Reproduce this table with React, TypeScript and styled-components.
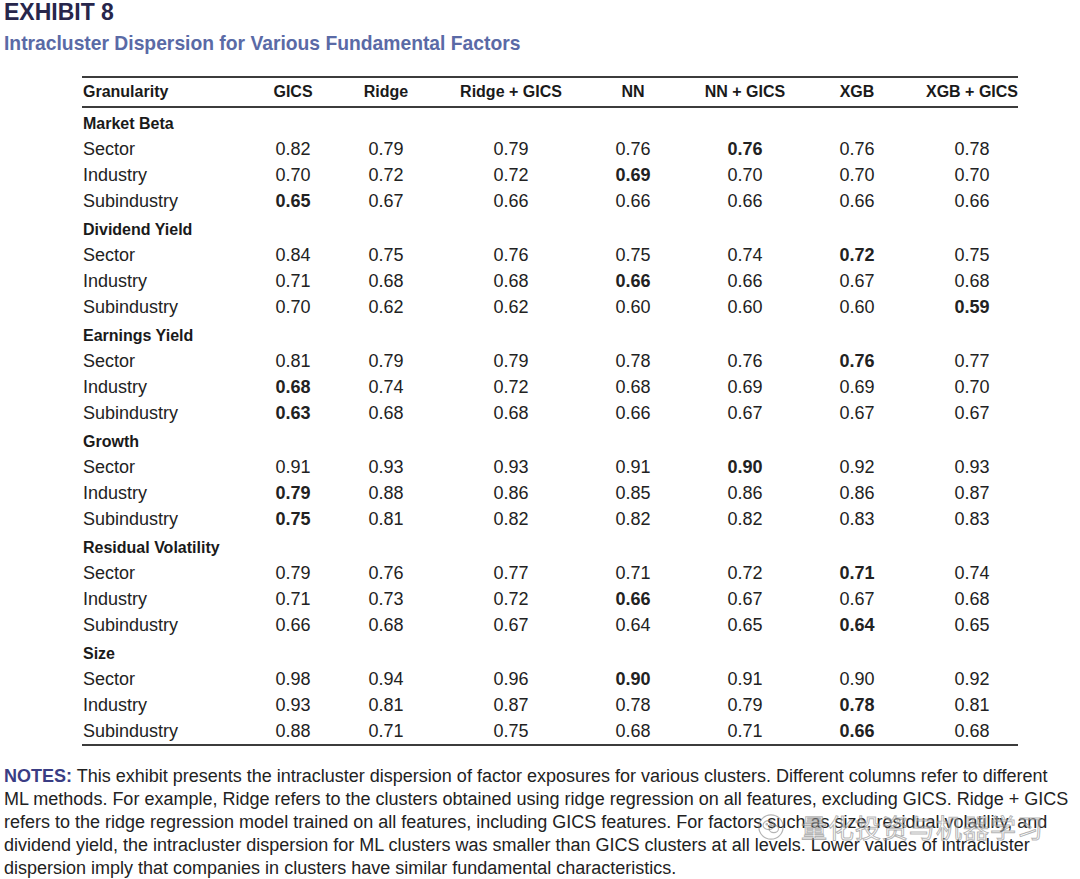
import React from 'react';
import styled, { createGlobalStyle } from 'styled-components';

const GlobalStyle = createGlobalStyle`
  html, body {
    margin: 0;
    padding: 0;
    background: #ffffff;
    overflow-x: hidden;
  }
  body {
    font-family: "Liberation Sans", Arial, sans-serif;
    color: #1f1f1f;
  }
`;

const Page = styled.div`
  width: 1080px;
  padding-left: 4px;
  box-sizing: border-box;
`;

const Title = styled.h1`
  margin: 0;
  font-size: 23px;
  line-height: 24px;
  font-weight: 700;
  color: #27264b;
`;

const Subtitle = styled.h2`
  margin: 8px 0 0;
  font-size: 19.3px;
  line-height: 24px;
  font-weight: 700;
  color: #5a6aa6;
`;

const Table = styled.div`
  margin: 20px 0 0 78px;
  width: 936px;
  border-top: 2px solid #3c3c3c;
  border-bottom: 2px solid #3c3c3c;
`;

const cols = '165px 92px 94px 156px 88px 136px 88px 1fr';

const HeaderRow = styled.div`
  display: grid;
  grid-template-columns: ${cols};
  height: 28px;
  line-height: 28px;
  border-bottom: 2px solid #3c3c3c;
  font-size: 16px;
  font-weight: 700;
  color: #1a1a1a;
`;

const GroupRow = styled.div`
  padding: 3px 0 0 1px;
  height: 25px;
  line-height: 25px;
  font-size: 16px;
  font-weight: 700;
  color: #1a1a1a;
`;

const DataRow = styled.div`
  display: grid;
  grid-template-columns: ${cols};
  height: 26px;
  line-height: 26px;
  font-size: 18px;
  color: #222;
`;

const Cell = styled.div<{ $first?: boolean; $last?: boolean; $bold?: boolean }>`
  text-align: ${({ $first }) => ($first ? 'left' : 'center')};
  padding-left: ${({ $first, $last }) => ($first ? '1px' : $last ? '25px' : '0')};
  font-weight: ${({ $bold }) => ($bold ? 700 : 'inherit')};
  white-space: nowrap;
`;

const Notes = styled.div`
  position: relative;
  margin-top: 19px;
  font-size: 18px;
  line-height: 23px;
  color: #222;
`;

const NoteLine = styled.span`
  display: block;
  white-space: nowrap;
`;

const NotesLabel = styled.span`
  color: #3a3d84;
  font-weight: 700;
`;

const Watermark = styled.div`
  position: absolute;
  left: 753px;
  top: 46px;
  display: flex;
  align-items: center;
  gap: 16px;
  pointer-events: none;
`;

const WatermarkText = styled.span`
  font-family: "Noto Sans CJK SC", sans-serif;
  font-size: 26px;
  line-height: 32px;
  letter-spacing: 1px;
  color: rgba(255, 255, 255, 0.35);
  -webkit-text-stroke: 1px rgba(130, 130, 130, 0.6);
`;

const headers = ['Granularity', 'GICS', 'Ridge', 'Ridge + GICS', 'NN', 'NN + GICS', 'XGB', 'XGB + GICS'];

const groups: { name: string; rows: [string, string[]][] }[] = [
  {
    name: 'Market Beta',
    rows: [
      ['Sector', ['0.82', '0.79', '0.79', '0.76', '*0.76', '0.76', '0.78']],
      ['Industry', ['0.70', '0.72', '0.72', '*0.69', '0.70', '0.70', '0.70']],
      ['Subindustry', ['*0.65', '0.67', '0.66', '0.66', '0.66', '0.66', '0.66']],
    ],
  },
  {
    name: 'Dividend Yield',
    rows: [
      ['Sector', ['0.84', '0.75', '0.76', '0.75', '0.74', '*0.72', '0.75']],
      ['Industry', ['0.71', '0.68', '0.68', '*0.66', '0.66', '0.67', '0.68']],
      ['Subindustry', ['0.70', '0.62', '0.62', '0.60', '0.60', '0.60', '*0.59']],
    ],
  },
  {
    name: 'Earnings Yield',
    rows: [
      ['Sector', ['0.81', '0.79', '0.79', '0.78', '0.76', '*0.76', '0.77']],
      ['Industry', ['*0.68', '0.74', '0.72', '0.68', '0.69', '0.69', '0.70']],
      ['Subindustry', ['*0.63', '0.68', '0.68', '0.66', '0.67', '0.67', '0.67']],
    ],
  },
  {
    name: 'Growth',
    rows: [
      ['Sector', ['0.91', '0.93', '0.93', '0.91', '*0.90', '0.92', '0.93']],
      ['Industry', ['*0.79', '0.88', '0.86', '0.85', '0.86', '0.86', '0.87']],
      ['Subindustry', ['*0.75', '0.81', '0.82', '0.82', '0.82', '0.83', '0.83']],
    ],
  },
  {
    name: 'Residual Volatility',
    rows: [
      ['Sector', ['0.79', '0.76', '0.77', '0.71', '0.72', '*0.71', '0.74']],
      ['Industry', ['0.71', '0.73', '0.72', '*0.66', '0.67', '0.67', '0.68']],
      ['Subindustry', ['0.66', '0.68', '0.67', '0.64', '0.65', '*0.64', '0.65']],
    ],
  },
  {
    name: 'Size',
    rows: [
      ['Sector', ['0.98', '0.94', '0.96', '*0.90', '0.91', '0.90', '0.92']],
      ['Industry', ['0.93', '0.81', '0.87', '0.78', '0.79', '*0.78', '0.81']],
      ['Subindustry', ['0.88', '0.71', '0.75', '0.68', '0.71', '*0.66', '0.68']],
    ],
  },
];

// the note is typeset with fixed line breaks, as in the printed exhibit
const noteLines = [
  'ML methods. For example, Ridge refers to the clusters obtained using ridge regression on all features, excluding GICS. Ridge + GICS',
  'refers to the ridge regression model trained on all features, including GICS features. For factors such as size, residual volatility, and',
  'dividend yield, the intracluster dispersion for ML clusters was smaller than GICS clusters at all levels. Lower values of intracluster',
  'dispersion imply that companies in clusters have similar fundamental characteristics.',
];

const ChatIcon = () => (
  <svg width="28" height="28" viewBox="0 0 30 30" fill="none" stroke="rgba(130,130,130,0.6)" strokeWidth="1.2">
    <circle cx="15" cy="15" r="13" />
    <ellipse cx="12.5" cy="13" rx="6" ry="4.8" />
    <ellipse cx="18" cy="17" rx="5" ry="4" />
    <circle cx="10.5" cy="12" r="0.8" />
    <circle cx="14.5" cy="12" r="0.8" />
  </svg>
);

export default function App() {
  return (
    <Page>
      <GlobalStyle />
      <Title>EXHIBIT 8</Title>
      <Subtitle>Intracluster Dispersion for Various Fundamental Factors</Subtitle>

      <Table>
        <HeaderRow>
          {headers.map((h, i) => (
            <Cell key={h} $first={i === 0} $last={i === headers.length - 1}>
              {h}
            </Cell>
          ))}
        </HeaderRow>
        {groups.map((g) => (
          <React.Fragment key={g.name}>
            <GroupRow>{g.name}</GroupRow>
            {g.rows.map(([label, vals]) => (
              <DataRow key={label}>
                <Cell $first>{label}</Cell>
                {vals.map((v, i) => (
                  <Cell key={i} $bold={v.startsWith('*')} $last={i === vals.length - 1}>
                    {v.replace('*', '')}
                  </Cell>
                ))}
              </DataRow>
            ))}
          </React.Fragment>
        ))}
      </Table>

      <Notes>
        <NoteLine>
          <NotesLabel>NOTES:</NotesLabel> This exhibit presents the intracluster dispersion of factor exposures for
          various clusters. Different columns refer to different
        </NoteLine>
        {noteLines.map((line) => (
          <NoteLine key={line}>{line}</NoteLine>
        ))}
        <Watermark>
          <ChatIcon />
          <WatermarkText>量化投资与机器学习</WatermarkText>
        </Watermark>
      </Notes>
    </Page>
  );
}
